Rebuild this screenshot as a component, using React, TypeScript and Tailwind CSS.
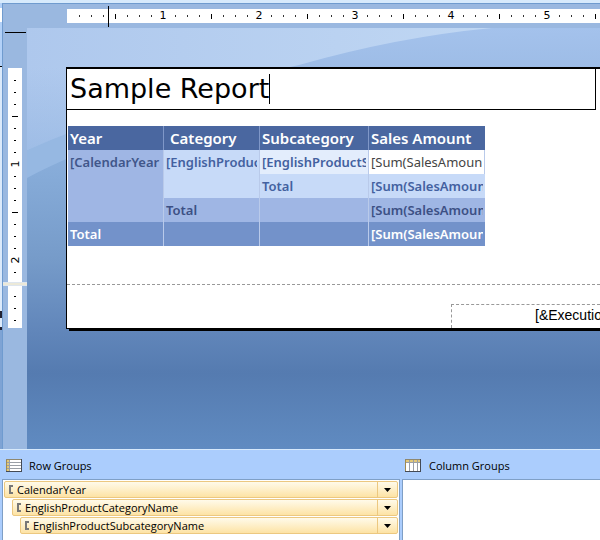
import React from "react";

const grid = "font-['Noto_Sans','Open_Sans',sans-serif]";

function HorizontalRuler() {
  const marks = Array.from({ length: 52 }, (_, i) => i + 1);
  return (
    <div className="flex h-6 shrink-0 bg-[#9ab8e0] pt-[5px] pl-[64px]">
      <div className="relative flex h-3.5 min-w-0 flex-1 overflow-hidden bg-white pl-1.5">
        {marks.map((n) => (
          <span key={n} className="flex w-3 shrink-0 items-center justify-center font-['DejaVu_Sans',sans-serif] text-[11px] leading-[14px] text-black">
            {n % 8 === 0 ? n / 8 : <i className={n % 4 === 0 ? "h-[5px] w-px bg-black" : "h-0.5 w-px bg-[#333]"} />}
          </span>
        ))}
      </div>
    </div>
  );
}

function VerticalMarks({ count }: { count: number }) {
  const marks = Array.from({ length: count }, (_, i) => i + 1);
  return (
    <>
      {marks.map((n) => (
        <span key={n} className="flex h-3 w-3.5 shrink-0 items-center justify-center font-['DejaVu_Sans',sans-serif] text-[11px] leading-3 text-black">
          {n % 8 === 0 ? <b className="-rotate-90 font-normal">{n / 8}</b> : <i className={n % 4 === 0 ? "h-px w-[6px] bg-black" : "h-px w-0.5 bg-black"} />}
        </span>
      ))}
    </>
  );
}

function VerticalRuler() {
  return (
    <div className="flex w-6 shrink-0 flex-col bg-[#9ab8e0] pt-1">
      <div className="mr-px ml-0.5 h-px shrink-0 bg-black" />
      <div className="mt-[35px] ml-[5px] flex w-3.5 flex-col bg-white pt-1.5">
        <VerticalMarks count={17} />
        <div className="-mr-[5px] -ml-[5px] my-[4px] h-1 border-y border-[#dfe6ee] bg-[#ece9d8]" />
        <VerticalMarks count={3} />
        <div className="h-0.5" />
      </div>
    </div>
  );
}

function Backdrop() {
  return (
    <svg className="absolute inset-0 size-full" viewBox="0 0 573 421" preserveAspectRatio="none" aria-hidden="true">
      <defs>
        <linearGradient id="base" x1="0" y1="0" x2="0" y2="1">
          <stop offset="0" stopColor="#a4c2ec" />
          <stop offset="0.1" stopColor="#9dbce6" />
          <stop offset="0.35" stopColor="#86abd8" />
          <stop offset="0.55" stopColor="#769bc9" />
          <stop offset="0.72" stopColor="#6186ba" />
          <stop offset="0.82" stopColor="#557bb0" />
          <stop offset="1" stopColor="#608bc1" />
        </linearGradient>
        <linearGradient id="glow" x1="0" y1="0" x2="1" y2="0">
          <stop offset="0" stopColor="#aec8ed" />
          <stop offset="1" stopColor="#c0d7f3" />
        </linearGradient>
        <linearGradient id="shade" x1="0" y1="0" x2="0" y2="1">
          <stop offset="0" stopColor="#8fb2df" stopOpacity="0" />
          <stop offset="1" stopColor="#8fb2df" stopOpacity="0.5" />
        </linearGradient>
      </defs>
      <rect width="573" height="421" fill="url(#base)" />
      <path d="M0 150 Q20 139 60 122 V60 H0Z" fill="#96b8e2" />
      <path d="M0 122 Q120 70 272 37 Q370 9 465 0 H0Z" fill="url(#glow)" />
      <path d="M0 122 Q30 109 60 98 V40 H0Z" fill="url(#shade)" />
    </svg>
  );
}

const cell = "overflow-hidden border-[#b9caea] px-0.5 text-left align-top whitespace-nowrap";
const head = "border-[#7f97c8] p-0 text-left font-semibold whitespace-nowrap";

function Field({ name }: { name: string }) {
  return <div className="overflow-hidden">{name}</div>;
}

function ReportTable() {
  return (
    <table className={`mt-4 ml-px w-[417px] table-fixed border-separate border-spacing-0 text-[13px] leading-6 font-semibold ${grid}`}>
      <colgroup>
        <col className="w-24" />
        <col className="w-24" />
        <col className="w-[109px]" />
        <col />
      </colgroup>
      <thead>
        <tr className="h-6 bg-[#4a67a0] text-[15px] text-white">
          <th className={`${head} border-r pl-0.5`}>Year</th>
          <th className={`${head} border-r pl-1.5`}>Category</th>
          <th className={`${head} border-r pl-0.5`}>Subcategory</th>
          <th className={`${head} pl-0.5`}>Sales Amount</th>
        </tr>
      </thead>
      <tbody>
        <tr className="h-6">
          <td rowSpan={3} className={`${cell} border-r bg-[#9fb6e4] text-[#41568a]`}><Field name="[CalendarYear" /></td>
          <td rowSpan={2} className={`${cell} border-r bg-[#c7daf8] text-[#4361a0]`}><Field name="[EnglishProduc" /></td>
          <td className={`${cell} border-r bg-[#e3edfc] text-[#4361a0]`}><Field name="[EnglishProductS" /></td>
          <td className={`${cell} border-r bg-white font-normal text-[#444]`}><Field name="[Sum(SalesAmount" /></td>
        </tr>
        <tr className="h-6 bg-[#c7daf8] text-[#4361a0]">
          <td className={`${cell} border-r`}>Total</td>
          <td className={cell}><Field name="[Sum(SalesAmoun" /></td>
        </tr>
        <tr className="h-6 bg-[#9fb6e4] text-[#3c5084]">
          <td className={`${cell} border-r`}>Total</td>
          <td className={`${cell} border-r`} />
          <td className={cell}><Field name="[Sum(SalesAmoun" /></td>
        </tr>
        <tr className="h-6 bg-[#7392ca] text-white">
          <td className={`${cell} border-r`}>Total</td>
          <td className={`${cell} border-r`} />
          <td className={`${cell} border-r`} />
          <td className={cell}><Field name="[Sum(SalesAmoun" /></td>
        </tr>
      </tbody>
    </table>
  );
}

function ReportPage() {
  return (
    <div className="relative mt-[39px] ml-[39px] border-t-2 border-b border-l border-black bg-white shadow-[3px_2px_0_#000]">
      <div className="mr-1 flex h-[41px] items-center border-r border-b border-black pl-[3px]">
        <input aria-label="Report title" defaultValue="Sample Report" className="field-sizing-content h-9 bg-transparent font-['DejaVu_Sans',sans-serif] text-[27px] leading-9 text-black outline-none" />
        <span className="h-[30px] w-px bg-black" />
      </div>
      <ReportTable />
      <div className="mt-[38px] flex h-11 justify-end border-t border-dashed border-[#999] pt-[19px]">
        <div className="w-[149px] overflow-hidden border-t border-l border-dashed border-[#999] pl-[83px] font-['Liberation_Sans',sans-serif] text-[14px] leading-5 whitespace-nowrap text-black">
          [&amp;Executio
        </div>
      </div>
    </div>
  );
}

function GridIcon({ columns = false }: { columns?: boolean }) {
  return (
    <svg width="16" height="14" viewBox="0 0 16 14" shapeRendering="crispEdges" aria-hidden="true">
      <rect width="16" height="13" fill="#fff" />
      {columns ? (
        <>
          <rect width="16" height="4" fill="#e3c878" />
          <path d="M0 3.5H16M4.5 0V12M8.5 0V12M12.5 0V12" stroke="#9a9fa6" />
        </>
      ) : (
        <>
          <rect width="4" height="13" fill="#e3c878" />
          <path d="M3.5 0V13M0 3.5H16M0 6.5H16M0 9.5H16" stroke="#9a9fa6" />
        </>
      )}
      <path d="M0.5 0.5V12.5" stroke="#a08a50" />
      <path d="M0 0.5H15.5" stroke="#8f8870" />
      <path d="M0 12.5H15.5V0" fill="none" stroke="#444a55" />
    </svg>
  );
}

function GroupRow({ name, indent }: { name: string; indent: string }) {
  return (
    <li className={`flex h-[17px] rounded-[2px] border border-[#ecc880] bg-linear-to-b from-[#fffaea] to-[#fde3a4] ${indent}`}>
      <span className="flex flex-1 items-center gap-1 pl-1">
        <i className="h-[9px] w-1 border-2 border-r-0 border-[#777]" />
        <span className="leading-[15px]">{name}</span>
      </span>
      <button type="button" aria-label={`${name} options`} className="flex w-5 items-center justify-center border-l border-[#ecc880]">
        <svg width="7" height="4" viewBox="0 0 7 4" aria-hidden="true"><path d="M0 0H7L3.5 4Z" /></svg>
      </button>
    </li>
  );
}

export default function App() {
  return (
    <div className="flex flex-col bg-[#abcdfd] text-black">
      <div className="h-[3px] bg-[#d7eafc]" />
      <div className="flex">
        <div className="flex w-0.5 flex-col bg-[#b3d1f8] pt-[5px]">
          <div className="h-3.5 bg-white" />
          <div className="mt-11 h-px bg-black" />
          <div className="h-[244px] bg-[#dceafb]" />
          <div className="h-[7px] bg-[#223]" />
          <div className="h-[9px] bg-[#dceafb]" />
          <div className="h-[3px] bg-[#223]" />
          <div className="flex-1 bg-[#7ea3d4]" />
        </div>
        <div className="flex min-w-0 flex-1 flex-col border-t border-l border-[#6f9bcf]">
          <div className="relative">
            <HorizontalRuler />
            <div className="absolute top-0.5 left-[105px] h-[21px] w-px bg-black" />
          </div>
          <div className="flex">
            <VerticalRuler />
            <div className="relative min-w-0 flex-1 overflow-hidden pb-[120px]">
              <Backdrop />
              <ReportPage />
            </div>
          </div>
        </div>
      </div>
      <div className="flex border-t border-[#d7e9fb] font-['Open_Sans','Noto_Sans',sans-serif] text-[11px]">
        <section className="w-2/3 pl-0.5">
          <h2 className="flex h-[29px] items-center gap-[7px] pt-0.5 pl-1 leading-4"><GridIcon />Row Groups</h2>
          <ul className="flex h-[61px] flex-col gap-px border border-b-0 border-[#7f9fc6] bg-white p-px">
            <GroupRow name="CalendarYear" indent="" />
            <GroupRow name="EnglishProductCategoryName" indent="ml-2" />
            <GroupRow name="EnglishProductSubcategoryName" indent="ml-4" />
          </ul>
        </section>
        <section className="flex-1 pl-0.5">
          <h2 className="flex h-[29px] items-center gap-2 pt-0.5 pl-[3px] leading-4"><GridIcon columns />Column Groups</h2>
          <div className="h-[61px] border-t border-l border-[#7f9fc6] bg-white" />
        </section>
      </div>
    </div>
  );
}
